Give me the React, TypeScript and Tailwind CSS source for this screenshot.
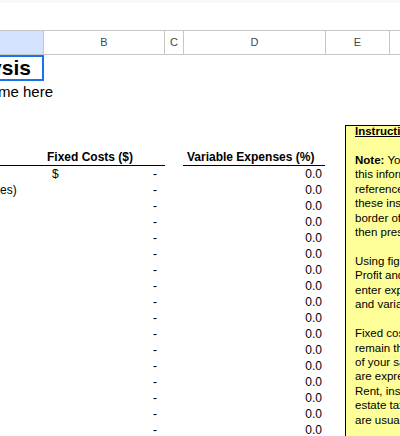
import React from 'react';

const columns = [
	{ id: 'A', width: 'w-[44px]', selected: true },
	{ id: 'B', width: 'w-[121px]' },
	{ id: 'C', width: 'w-[19px]' },
	{ id: 'D', width: 'w-[142px]' },
	{ id: 'E', width: 'w-[64px]' },
];

const dataRows = Array.from({ length: 17 }, (_, i) => ({
	label: i === 1 ? 'es)' : '',
	dollar: i === 0,
}));

const instructions: { text: string; bold?: string; heading?: boolean }[] = [
	{ text: 'Instructions', heading: true },
	{ text: '' },
	{ bold: 'Note:', text: ' You may want to print' },
	{ text: 'this information to use as' },
	{ text: 'reference later. To delete' },
	{ text: 'these instructions, click the' },
	{ text: 'border of this text box and' },
	{ text: 'then press the DELETE key.' },
	{ text: '' },
	{ text: 'Using figures from your' },
	{ text: 'Profit and Loss statement,' },
	{ text: 'enter expenses as fixed costs' },
	{ text: 'and variable expenses.' },
	{ text: '' },
	{ text: 'Fixed costs are those that' },
	{ text: 'remain the same regardless' },
	{ text: 'of your sales volume. They' },
	{ text: 'are expressed in dollars.' },
	{ text: 'Rent, insurance, and real' },
	{ text: 'estate taxes and interest' },
	{ text: 'are usually fixed costs.' },
];

export default function App() {
	return (
		<div className="w-[400px] h-[436px] overflow-hidden bg-white font-['Liberation_Sans',Arial,sans-serif] text-black">
			<div className="h-[3px] bg-[#f8f9fa]" />
			<div className="h-[27px]" />
			<ColumnHeaders />
			<div className="flex">
				<div className="w-[345px] shrink-0">
					<div className="flex h-[26px]">
						<div className="w-[44px] border-2 border-l-0 border-[#1a73e8] flex justify-end overflow-hidden pr-[11px]">
							<span className="whitespace-nowrap text-[21px] leading-[22px] font-bold">
								Break-Even Analysis
							</span>
						</div>
					</div>
					<div className="h-[21px] pt-px">
						<div className="w-[53px] flex justify-end overflow-hidden">
							<span className="whitespace-nowrap text-[15px] leading-[20px]">
								Enter your company name here
							</span>
						</div>
					</div>
					<div className="h-[47px]" />
					<div className="flex h-[17px] text-[12px] leading-4 font-bold">
						<div className="w-[165px] border-b border-black pl-[47px]">
							Fixed Costs ($)
						</div>
						<div className="w-[18px]" />
						<div className="w-[142px] border-b border-black pl-[4px]">
							Variable Expenses (%)
						</div>
					</div>
					{dataRows.map((row, i) => (
						<div key={i} className="flex h-4 text-[12px] leading-4">
							<div className="w-[44px] overflow-hidden whitespace-nowrap">
								{row.label}
							</div>
							<div className="w-[121px] flex justify-between pl-2 pr-[8px]">
								<span>{row.dollar ? '$' : ''}</span>
								<span>-</span>
							</div>
							<div className="w-[19px]" />
							<div className="w-[142px] text-right pr-[4px]">0.0</div>
						</div>
					))}
				</div>
				<div className="mt-[70px] w-[140px] h-[400px] shrink-0 border-l border-t border-black bg-[#ffff99] pl-[9px] text-[11.5px] leading-[14.45px]">
					<div className="-mt-[2px]">
						{instructions.map((line, i) => (
							<div key={i} className="whitespace-nowrap h-[14.45px]">
								{line.heading ? (
									<span className="font-bold underline">{line.text}</span>
								) : (
									<>
										{line.bold && <span className="font-bold">{line.bold}</span>}
										{line.text}
									</>
								)}
							</div>
						))}
					</div>
				</div>
			</div>
		</div>
	);
}

function ColumnHeaders() {
	return (
		<div className="flex h-[25px] border-y border-[#c4c7c5] text-[11px] text-[#444746]">
			{columns.map((col) => (
				<div
					key={col.id}
					className={`${col.width} shrink-0 border-r border-[#c4c7c5] flex items-center justify-center ${
						col.selected ? 'bg-[#d3e3fd]' : ''
					}`}
				>
					{col.selected ? '' : col.id}
				</div>
			))}
			<div className="flex-1" />
		</div>
	);
}
